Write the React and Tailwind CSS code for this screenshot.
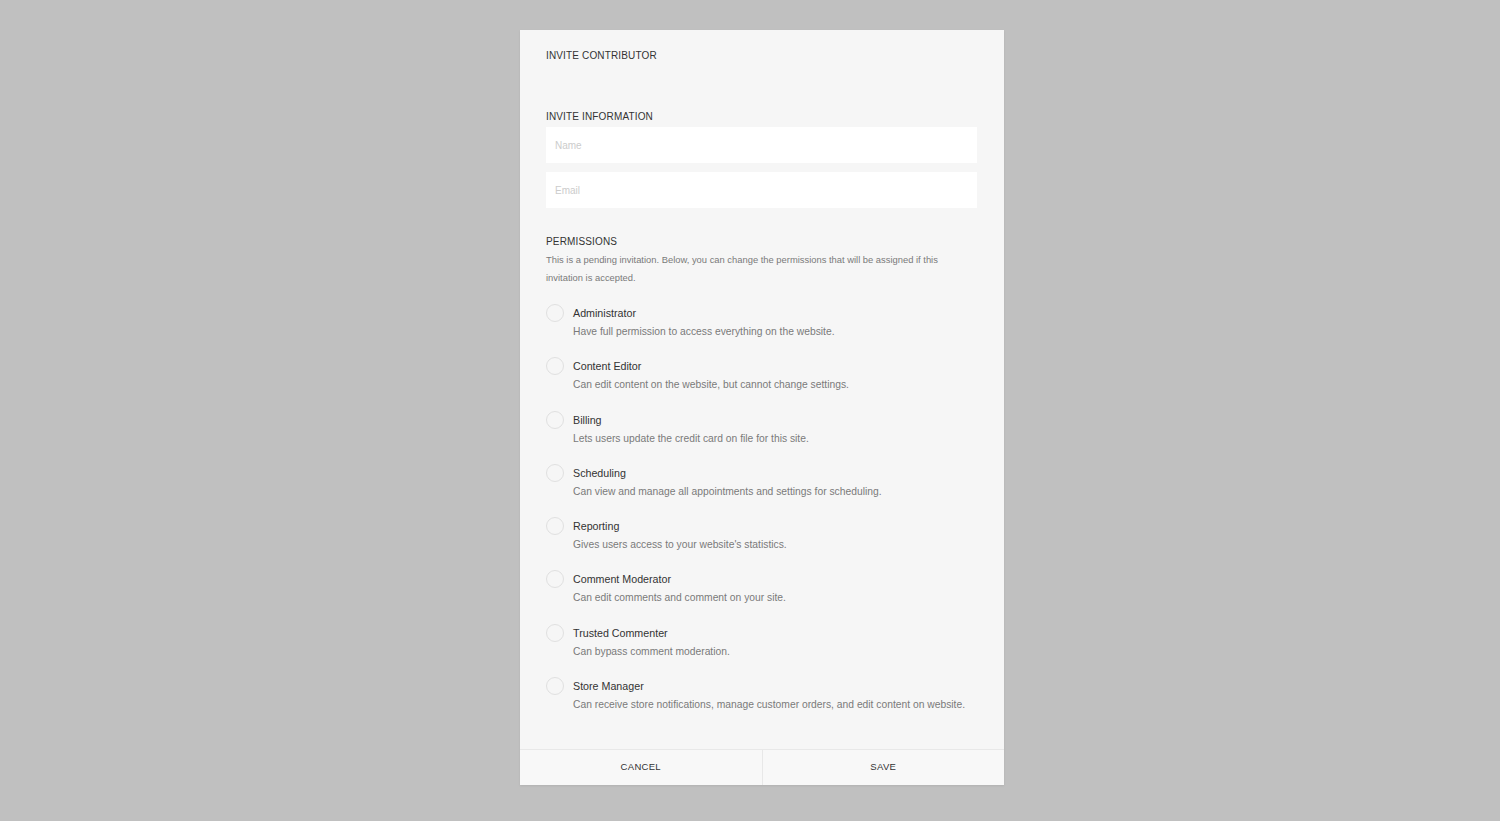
import React from "react";

const roles = [
  ["Administrator", "Have full permission to access everything on the website."],
  ["Content Editor", "Can edit content on the website, but cannot change settings."],
  ["Billing", "Lets users update the credit card on file for this site."],
  ["Scheduling", "Can view and manage all appointments and settings for scheduling."],
  ["Reporting", "Gives users access to your website's statistics."],
  ["Comment Moderator", "Can edit comments and comment on your site."],
  ["Trusted Commenter", "Can bypass comment moderation."],
  ["Store Manager", "Can receive store notifications, manage customer orders, and edit content on website."],
];

const font = { fontFamily: '"Liberation Sans", Arial, sans-serif' };

export default function App() {
  return (
    <div className="min-h-screen w-full bg-[#c0c0c0] pt-[30px]" style={font}>
      <div className="ml-[520px] flex h-[755px] w-[484px] flex-col bg-[#f6f6f6] shadow-[0_1px_2px_rgba(0,0,0,0.08)]">
        <div className="px-[26px] pt-[19px]">
          <div className="text-[10px] leading-[14px] tracking-[0.15px] text-[#333]">INVITE CONTRIBUTOR</div>

          <div className="mt-[47px] text-[10px] leading-[14px] tracking-[0.15px] text-[#333]">INVITE INFORMATION</div>
          <input
            className="mt-[3px] block h-[36px] w-[431px] bg-white px-[9px] text-[10px] text-[#333] outline-none placeholder:text-[#cccccc]"
            placeholder="Name"
          />
          <input
            className="mt-[9px] block h-[36px] w-[431px] bg-white px-[9px] text-[10px] text-[#333] outline-none placeholder:text-[#cccccc]"
            placeholder="Email"
          />

          <div className="mt-[27px] text-[10px] leading-[14px] tracking-[0.15px] text-[#333]">PERMISSIONS</div>
          <p className="mt-[2px] text-[9.4px] leading-[18px] text-[#7a7a7a]">
            This is a pending invitation. Below, you can change the permissions that will be assigned if this
            <br />
            invitation is accepted.
          </p>

          <div className="mt-[17px] flex flex-col gap-[16.3px]">
            {roles.map(([name, desc]) => (
              <label key={name} className="flex cursor-pointer items-start">
                <span className="h-[18px] w-[18px] shrink-0 rounded-full border border-[#e0e0e0] bg-[#f6f6f6]" />
                <span className="ml-[9px] flex flex-col">
                  <span className="text-[10.7px] leading-[18px] text-[#333]">{name}</span>
                  <span className="pt-[1px] text-[10.3px] leading-[18px] text-[#7a7a7a]">{desc}</span>
                </span>
              </label>
            ))}
          </div>
        </div>

        <div className="mt-auto flex h-[36px] border-t border-[#e8e8e8] bg-[#f8f8f8]">
          <button className="flex-1 border-r border-[#e8e8e8] text-[9.5px] tracking-[0.3px] text-[#333]">CANCEL</button>
          <button className="flex-1 text-[9.5px] tracking-[0.3px] text-[#333]">SAVE</button>
        </div>
      </div>
    </div>
  );
}
